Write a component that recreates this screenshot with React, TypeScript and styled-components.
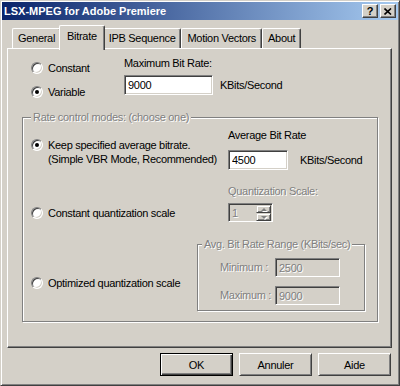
import styled, { createGlobalStyle } from "styled-components";

const FACE = "#d4d0c8";
const SHADOW = "#808080";
const DARK = "#404040";

const GlobalStyle = createGlobalStyle`
    html, body {
        margin: 0;
        padding: 0;
        background: ${FACE};
    }
    body {
        font-family: "Liberation Sans", Arial, sans-serif;
        font-size: 11px;
        letter-spacing: -0.3px;
        color: #000;
    }
`;

const Window = styled.div`
    width: 400px;
    height: 386px;
    box-sizing: border-box;
    background: ${FACE};
    border: 1px solid;
    border-color: ${FACE} ${DARK} ${DARK} ${FACE};
    box-shadow: inset 1px 1px #fff, inset -1px -1px ${SHADOW};
    padding: 1px;
    display: flex;
    flex-direction: column;
`;

const TitleBar = styled.div`
    height: 18px;
    flex: none;
    display: flex;
    align-items: center;
    padding: 0 2px 0 2px;
    background: linear-gradient(to right, #0a246a, #a6caf0);
    color: #fff;
    font-weight: bold;
    letter-spacing: 0;
    .title {
        flex: 1;
    }
`;

const CaptionButton = styled.div`
    width: 16px;
    height: 14px;
    box-sizing: border-box;
    margin-left: 2px;
    background: ${FACE};
    border: 1px solid;
    border-color: #fff ${DARK} ${DARK} #fff;
    box-shadow: inset -1px -1px ${SHADOW};
    color: #000;
    font-size: 11px;
    font-weight: bold;
    display: flex;
    align-items: center;
    justify-content: center;
    line-height: 1;
`;

const Body = styled.div`
    flex: 1;
    display: flex;
    flex-direction: column;
    padding: 5px 6px 0 5px;
`;

const TabStrip = styled.div`
    height: 23px;
    display: flex;
    align-items: flex-end;
    padding-left: 5px;
`;

const Tab = styled.div<{ $active?: boolean }>`
    box-sizing: border-box;
    height: ${(p) => (p.$active ? 25 : 20)}px;
    margin: ${(p) => (p.$active ? "0 -2px -2px" : "0")};
    padding: ${(p) => (p.$active ? "0 7px 4px" : "0 5px 1px")};
    display: flex;
    align-items: center;
    background: ${FACE};
    border-top: 1px solid #fff;
    border-left: 1px solid #fff;
    border-right: 1px solid ${DARK};
    box-shadow: inset -1px 0 ${SHADOW};
    border-radius: 2px 2px 0 0;
    position: relative;
    z-index: ${(p) => (p.$active ? 2 : 0)};
`;

const Panel = styled.div`
    height: 300px;
    flex: none;
    box-sizing: border-box;
    border: 1px solid;
    border-color: #fff ${DARK} ${DARK} #fff;
    box-shadow: inset -1px -1px ${SHADOW};
    padding: 7px 0 0 14px;
`;

const TopRow = styled.div`
    display: grid;
    grid-template-columns: 93px auto;
    padding-left: 9px;
`;

const RadioLabel = styled.div<{ $h?: number }>`
    display: flex;
    align-items: center;
    gap: 5px;
    height: ${(p) => p.$h ?? 24}px;
    .lines {
        line-height: 14px;
    }
`;

const RadioDot = styled.span<{ $on?: boolean }>`
    flex: none;
    width: 12px;
    height: 12px;
    box-sizing: border-box;
    border-radius: 50%;
    background: #fff;
    border: 1px solid;
    border-color: ${SHADOW} #fff #fff ${SHADOW};
    box-shadow: inset 1px 1px ${DARK}, inset -1px -1px ${FACE};
    display: flex;
    align-items: center;
    justify-content: center;
    &::after {
        content: "";
        width: 4px;
        height: 4px;
        border-radius: 50%;
        background: ${(p) => (p.$on ? "#000" : "transparent")};
    }
`;

const Caption = styled.div<{ $disabled?: boolean }>`
    line-height: 13px;
    height: 13px;
    white-space: nowrap;
    color: ${(p) => (p.$disabled ? SHADOW : "#000")};
    text-shadow: ${(p) => (p.$disabled ? "1px 1px #fff" : "none")};
`;

const Field = styled.div<{ $gap: number; $top: number }>`
    display: flex;
    align-items: center;
    gap: ${(p) => p.$gap}px;
    margin-top: ${(p) => p.$top}px;
`;

const TextBox = styled.input<{ $w: number; $h?: number }>`
    width: ${(p) => p.$w}px;
    height: ${(p) => p.$h ?? 20}px;
    box-sizing: border-box;
    margin: 0;
    padding: 0 0 0 3px;
    font: inherit;
    letter-spacing: -0.3px;
    color: #000;
    background: #fff;
    border: 1px solid;
    border-color: ${SHADOW} #fff #fff ${SHADOW};
    box-shadow: inset 1px 1px ${DARK}, inset -1px -1px ${FACE};
    outline: none;
    &:disabled {
        background: ${FACE};
        color: ${SHADOW};
        -webkit-text-fill-color: ${SHADOW};
        text-shadow: 1px 1px #fff;
    }
`;

const Group = styled.fieldset<{ $w: number }>`
    width: ${(p) => p.$w}px;
    box-sizing: border-box;
    margin: 0;
    padding: 0;
    min-inline-size: 0;
    border: 1px solid ${SHADOW};
    box-shadow: 1px 1px #fff, inset 1px 1px #fff;
    legend {
        margin-left: ${(p) => (p.$w > 200 ? 8 : 4)}px;
        padding: 0 2px;
        line-height: 13px;
        background: ${FACE};
        color: ${SHADOW};
        text-shadow: 1px 1px #fff;
        white-space: nowrap;
    }
`;

const ModeGroup = styled(Group)`
    margin: 7px 0 0 0;
`;

const GroupInner = styled.div<{ $pad: string }>`
    padding: ${(p) => p.$pad};
`;

const ModeRow = styled.div<{ $left: number; $top: number; $align: string }>`
    display: grid;
    grid-template-columns: ${(p) => p.$left}px auto;
    align-items: ${(p) => p.$align};
    margin-top: ${(p) => p.$top}px;
`;

const RangeRow = styled.div<{ $top: number }>`
    display: grid;
    grid-template-columns: 55px 65px;
    align-items: center;
    margin-top: ${(p) => p.$top}px;
`;

const Spin = styled.div`
    width: 45px;
    height: 19px;
    box-sizing: border-box;
    display: flex;
    background: ${FACE};
    border: 1px solid;
    border-color: ${SHADOW} #fff #fff ${SHADOW};
    box-shadow: inset 1px 1px ${DARK};
    padding: 1px 1px 0 1px;
    .value {
        flex: 1;
        padding-left: 2px;
        line-height: 16px;
        color: ${SHADOW};
        text-shadow: 1px 1px #fff;
    }
    .arrows {
        width: 15px;
        display: flex;
        flex-direction: column;
    }
`;

const SpinButton = styled.div`
    flex: 1;
    box-sizing: border-box;
    border: 1px solid;
    border-color: ${FACE} ${DARK} ${DARK} ${FACE};
    box-shadow: inset 1px 1px #fff, inset -1px -1px ${SHADOW};
    display: flex;
    align-items: center;
    justify-content: center;
`;

const ButtonRow = styled.div`
    display: flex;
    justify-content: flex-end;
    gap: 6px;
    margin-top: 5px;
    padding-right: 1px;
`;

const PushButton = styled.div<{ $default?: boolean }>`
    width: 73px;
    height: 23px;
    box-sizing: border-box;
    display: flex;
    align-items: center;
    justify-content: center;
    background: ${FACE};
    border: 1px solid;
    border-color: ${(p) => (p.$default ? "#000" : `#fff ${DARK} ${DARK} #fff`)};
    box-shadow: ${(p) =>
        p.$default
            ? `inset 1px 1px #fff, inset -1px -1px ${DARK}, inset -2px -2px ${SHADOW}`
            : `inset 1px 1px ${FACE}, inset -1px -1px ${SHADOW}`};
`;

function Radio({ on, label, h }: { on?: boolean; label: string; h?: number }) {
    return (
        <RadioLabel $h={h}>
            <RadioDot $on={on} />
            {label}
        </RadioLabel>
    );
}

function Arrow({ up }: { up?: boolean }) {
    const pts = up ? "2,4 5,1 8,4" : "2,1 5,4 8,1";
    return (
        <svg width="9" height="5" viewBox="0 0 9 5">
            <polygon points={pts} fill="#fff" transform="translate(1,1)" />
            <polygon points={pts} fill={SHADOW} />
        </svg>
    );
}

export default function App() {
    return (
        <>
            <GlobalStyle />
            <Window>
                <TitleBar>
                    <span className="title">LSX-MPEG for Adobe Premiere</span>
                    <CaptionButton>?</CaptionButton>
                    <CaptionButton>
                        <svg width="8" height="7" viewBox="0 0 8 7">
                            <path d="M0.5 0.5 L7 6.5 M7 0.5 L0.5 6.5" stroke="#000" strokeWidth="1.6" />
                        </svg>
                    </CaptionButton>
                </TitleBar>
                <Body>
                    <TabStrip>
                        <Tab>General</Tab>
                        <Tab $active>Bitrate</Tab>
                        <Tab>IPB Sequence</Tab>
                        <Tab>Motion Vectors</Tab>
                        <Tab>About</Tab>
                    </TabStrip>
                    <Panel>
                        <TopRow>
                            <div>
                                <Radio label="Constant" />
                                <Radio on label="Variable" />
                            </div>
                            <div style={{ paddingTop: 1 }}>
                                <Caption>Maximum Bit Rate:</Caption>
                                <Field $gap={7} $top={5}>
                                    <TextBox $w={89} defaultValue="9000" readOnly />
                                    KBits/Second
                                </Field>
                            </div>
                        </TopRow>
                        <ModeGroup $w={356}>
                            <legend>Rate control modes: (choose one)</legend>
                            <GroupInner $pad="0 0 10px 8px">
                                <ModeRow $left={197} $top={5} $align="end">
                                    <RadioLabel $h={30} style={{ alignItems: "flex-start", marginBottom: 2 }}>
                                        <RadioDot $on style={{ marginTop: 1 }} />
                                        <div className="lines">
                                            Keep specified average bitrate.
                                            <br />
                                            (Simple VBR Mode, Recommended)
                                        </div>
                                    </RadioLabel>
                                    <div>
                                        <Caption>Average Bit Rate</Caption>
                                        <Field $gap={12} $top={8}>
                                            <TextBox $w={60} defaultValue="4500" readOnly />
                                            KBits/Second
                                        </Field>
                                    </div>
                                </ModeRow>
                                <ModeRow $left={197} $top={15} $align="end">
                                    <Radio label="Constant quantization scale" h={19} />
                                    <div>
                                        <Caption $disabled>Quantization Scale:</Caption>
                                        <Field $gap={0} $top={5}>
                                            <Spin>
                                                <span className="value">1</span>
                                                <div className="arrows">
                                                    <SpinButton>
                                                        <Arrow up />
                                                    </SpinButton>
                                                    <SpinButton>
                                                        <Arrow />
                                                    </SpinButton>
                                                </div>
                                            </Spin>
                                        </Field>
                                    </div>
                                </ModeRow>
                                <ModeRow $left={166} $top={16} $align="center">
                                    <div style={{ paddingTop: 17 }}>
                                        <Radio label="Optimized quantization scale" h={20} />
                                    </div>
                                    <Group $w={168}>
                                        <legend>Avg. Bit Rate Range (KBits/sec)</legend>
                                        <GroupInner $pad="7px 0 5px 22px">
                                            <RangeRow $top={0}>
                                                <Caption $disabled>Minimum :</Caption>
                                                <TextBox $w={65} $h={19} defaultValue="2500" disabled />
                                            </RangeRow>
                                            <RangeRow $top={9}>
                                                <Caption $disabled>Maximum :</Caption>
                                                <TextBox $w={65} $h={19} defaultValue="9000" disabled />
                                            </RangeRow>
                                        </GroupInner>
                                    </Group>
                                </ModeRow>
                            </GroupInner>
                        </ModeGroup>
                    </Panel>
                    <ButtonRow>
                        <PushButton $default>OK</PushButton>
                        <PushButton>Annuler</PushButton>
                        <PushButton>Aide</PushButton>
                    </ButtonRow>
                </Body>
            </Window>
        </>
    );
}
